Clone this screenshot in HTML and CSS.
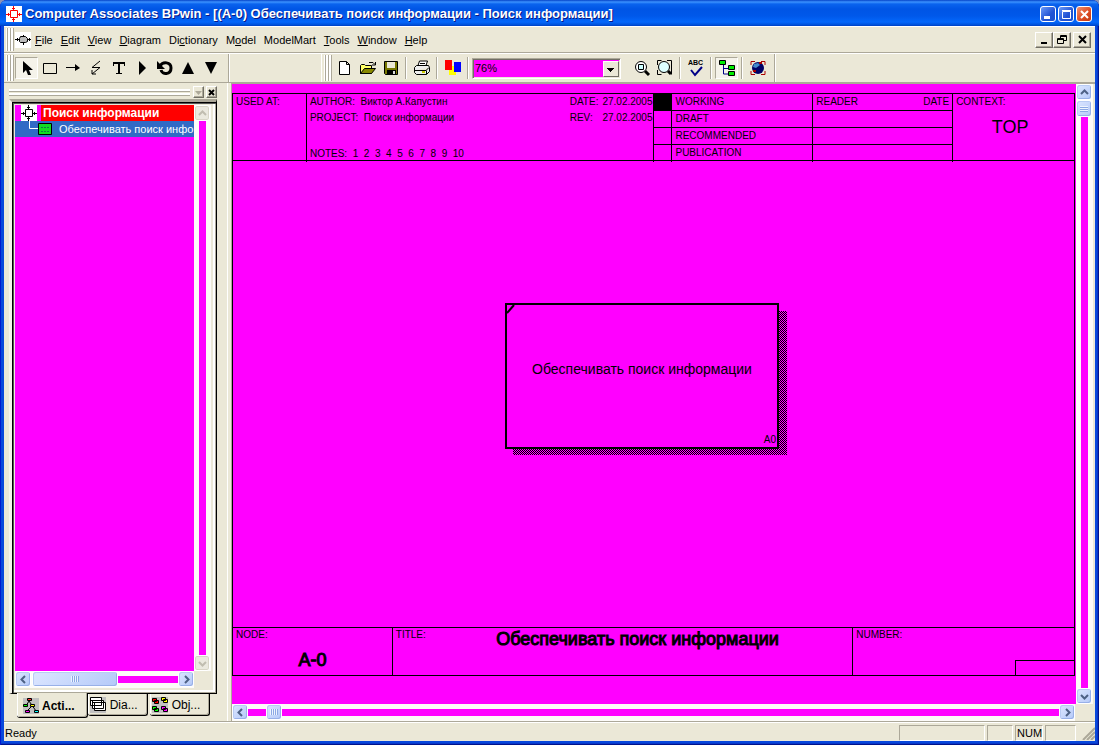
FILE: index.html
```html
<!DOCTYPE html>
<html lang="ru">
<head>
<meta charset="utf-8">
<title>Computer Associates BPwin</title>
<link rel="stylesheet" href="styles.css">
</head>
<body>
<div class="window">
  <header class="titlebar">
    <svg class="app-icon" width="16" height="16" viewBox="0 0 16 16"><path fill="#fff" d="M0 0h16v16H0z"/><g fill="none" stroke="#f00"><path d="M4.500 4.500h7v7h-7zM7.500 0v4M7.500 12v4M0 8.500h4M12 8.500h4"/><path d="M6 2.500h3M6 13.500h3M2.500 7v3M13.500 7v3"/></g></svg>
    <h1 class="title">Computer Associates BPwin - [(A-0) Обеспечивать поиск информации - Поиск информации]</h1>
    <button class="cap" aria-label="Minimize"><svg width="13" height="13"><path fill="#fff" d="M2 8h6v3H2z"/></svg></button>
    <button class="cap" aria-label="Maximize"><svg width="13" height="13"><path fill="none" stroke="#fff" d="M2.500 3.500h8v7h-8zM2 2.500h9"/></svg></button>
    <button class="cap cap-close" aria-label="Close"><svg width="13" height="13"><path stroke="#fff" stroke-width="2" d="M3 3l7 7M10 3l-7 7"/></svg></button>
  </header>

  <div class="client">
    <nav class="menubar">
      <span class="grip"></span>
      <svg class="doc-icon" width="16" height="16" viewBox="0 0 16 16"><path fill="#fff" d="M0 0h16v16H0z"/><path fill="#bbb" stroke="#000" d="M5.500 4.500h5l2 2v3l-2 1h-5l-1-1v-3z"/><path stroke="#000" fill="none" d="M0 7.500h4M2.500 6v3M12 7.500h4M14.500 6v3M8.500 3v1M8.500 11v2"/></svg>
      <button class="menu"><u>F</u>ile</button>
      <button class="menu"><u>E</u>dit</button>
      <button class="menu"><u>V</u>iew</button>
      <button class="menu"><u>D</u>iagram</button>
      <button class="menu">Di<u>c</u>tionary</button>
      <button class="menu">M<u>o</u>del</button>
      <button class="menu">ModelMart</button>
      <button class="menu"><u>T</u>ools</button>
      <button class="menu"><u>W</u>indow</button>
      <button class="menu"><u>H</u>elp</button>
      <div class="mdi">
        <button class="mdi-btn" aria-label="Minimize document"><svg width="12" height="10"><path d="M3 7h6v2H3z"/></svg></button>
        <button class="mdi-btn" aria-label="Restore document"><svg width="12" height="10"><path fill="none" stroke="#000" d="M4.500 3V.5h6v5H8M4 1.500h7M1.500 3.500h6v5h-6zM1 4.500h7"/></svg></button>
        <button class="mdi-btn mdi-close" aria-label="Close document"><svg width="12" height="10"><path stroke="#000" stroke-width="2" d="M3 1l7 7M10 1l-7 7"/></svg></button>
      </div>
    </nav>

    <div class="toolbars">
      <div class="toolbar tools">
        <span class="grip"></span>
        <button class="tool pressed" aria-label="Pointer"><svg width="18" height="18"><path d="M5 2v12l3-3 2 5h3l-2-5h4z"/></svg></button>
        <button class="tool" aria-label="Activity box"><svg width="18" height="18"><path fill="none" stroke="#000" d="M2.500 4.500h13v10h-13z"/></svg></button>
        <button class="tool" aria-label="Arrow"><svg width="18" height="18"><path d="M2 8h9V5l5 4-5 3V9H2z"/></svg></button>
        <button class="tool" aria-label="Squiggle"><svg width="18" height="18"><path fill="none" stroke="#000" d="M13 2L5 8.500h8L5 15M5 11v4h4"/></svg></button>
        <button class="tool" aria-label="Text"><svg width="18" height="18"><path d="M3 3h12v4h-1V5h-4v9h2v1H6v-1h2V5H4v2H3z"/></svg></button>
        <button class="tool" aria-label="Diagram dictionary"><svg width="18" height="18"><path d="M6 2v14l7-7z"/></svg></button>
        <button class="tool" aria-label="Go to sibling"><svg width="18" height="18"><path fill="none" stroke="#000" stroke-width="3" d="M4 7C7 2 15 3 15 9c0 7-9 7-10 2"/><path d="M1 2v8h8z"/></svg></button>
        <button class="tool" aria-label="Go to parent"><svg width="18" height="18"><path d="M9 3l6 12H3z"/></svg></button>
        <button class="tool" aria-label="Go to child"><svg width="18" height="18"><path d="M9 15L3 3h12z"/></svg></button>
      </div>
      <div class="toolbar standard">
        <span class="grip"></span>
        <button class="tool" aria-label="New"><svg width="18" height="18"><path fill="#fff" stroke="#000" d="M3.500 2.500h7l3 3v10h-10zM10.500 2.500v3h3"/></svg></button>
        <button class="tool" aria-label="Open"><svg width="18" height="18"><path fill="#ff6" stroke="#000" d="M1.500 14.500v-8l1-1h3l1 1h6v8z"/><path fill="#880" stroke="#000" d="M1.500 14.500l4-5h11l-4 5z"/><path fill="none" stroke="#000" d="M10 3.500h4l2 2M16.500 3v3H13"/></svg></button>
        <button class="tool" aria-label="Save"><svg width="18" height="18"><path fill="#770" stroke="#000" d="M2.500 2.500h13v13h-12l-1-1z"/><path fill="#ebe8d7" d="M5 3h8v6H5z"/><path d="M5 11h9v5H5z"/><path fill="#ddd" d="M11 12h2v3h-2z"/></svg></button>
        <span class="sep"></span>
        <button class="tool" aria-label="Print"><svg width="18" height="18"><path fill="#fff" stroke="#000" d="M4.500 8l2-6h8l-2 6z"/><path fill="#eee" stroke="#000" d="M1.500 8.500l2-2h12l1 2v4l-3 3h-10l-2-2zM2 11.500h11l3-3M13.500 11.500v4"/><path stroke="#000" d="M7 4.500h5M6 6.500h5"/><path fill="#cc0" d="M9 12h3v2H9z"/></svg></button>
        <span class="sep"></span>
        <button class="tool" aria-label="Colors"><svg width="18" height="18"><path fill="#ff0" d="M5 7h7v9H5z"/><path fill="#f00" d="M1 1h7v10H1z"/><path fill="#00f" d="M10 3h7v10h-7z"/></svg></button>
        <span class="sep"></span>
        <span class="combo">
          <select class="zoom" aria-label="Zoom"><option>76%</option><option>100%</option></select>
          <span class="combo-arrow"><svg width="12" height="12"><path d="M2 5h7v1H8v1H7v1H6v1H5V8H4V7H3V6H2z"/></svg></span>
        </span>
        <button class="tool" aria-label="Zoom in"><svg width="18" height="18"><circle cx="8" cy="8" r="5.500" fill="#fff" stroke="#000"/><path fill="#cff" stroke="#000" d="M5.500 5.500h5v5h-5z"/><path stroke="#000" stroke-width="3" d="M12 12l4 4"/></svg></button>
        <button class="tool" aria-label="Fit to window"><svg width="18" height="18"><path fill="none" stroke="#000" d="M1.500 6V1.500h4M11 1.500h4.500v14M1.500 11v4.500h4"/><circle cx="8" cy="8" r="5.500" fill="#dff" stroke="#000"/><path stroke="#000" stroke-width="3" d="M12 12l3 3"/></svg></button>
        <span class="sep"></span>
        <button class="tool" aria-label="Spell check"><span class="abc">ABC</span><svg width="18" height="11"><path fill="none" stroke="#008" stroke-width="2" d="M4 4l4 5 7-8"/></svg></button>
        <span class="sep"></span>
        <button class="tool pressed" aria-label="Model explorer"><svg width="18" height="18"><path fill="none" stroke="#008" d="M5.500 5v10H11M6 9.500h5"/><g fill="#0e0" stroke="#000"><path d="M1.500 1.500h6v4h-6zM10.500 6.500h6v4h-6zM10.500 12.500h6v4h-6z"/></g></svg></button>
        <span class="sep"></span>
        <button class="tool" aria-label="ModelMart"><svg width="18" height="18"><path fill="none" stroke="#a00" d="M2 6V2.500h4M12 2.500h4V6M2 12v3.500h4M12 15.500h4V12"/><circle cx="9" cy="9" r="6" fill="#006"/><path fill="#48c" d="M5 5l4-1 2 2-4 3-3-1z"/><path fill="#a00" d="M10 3h3v2h-3zM4 11h3v2H4z"/></svg></button>
      </div>
    </div>

    <main class="workspace">
      <aside class="explorer">
        <div class="dock-bar">
          <span class="dock-grip"></span>
          <button class="dock-btn" aria-label="Panel menu" disabled><svg width="9" height="9"><path fill="#aca899" d="M1 3h7L4.500 7z"/></svg></button>
          <button class="dock-btn" aria-label="Close panel"><svg width="9" height="9"><path stroke="#000" stroke-width="2" d="M2 2l5 5M7 2L2 7"/></svg></button>
        </div>
        <div class="tree-frame">
          <div class="tree-row">
            <ul class="tree">
              <li class="node root"><svg width="16" height="16"><path fill="#fff" d="M0 0h16v16H0z"/><path fill="none" stroke="#000" d="M4.500 4.500h7v7h-7zM7.500 0v4M7.500 12v4M0 8.500h4M12 8.500h4M6 2.500h3M6 13.500h3M2.500 7v3M13.500 7v3"/></svg><span>Поиск информации</span></li>
              <li class="node child"><svg width="32" height="16"><path fill="none" stroke="#fff" d="M8.500 0v7.500H17"/><path fill="#1d2" stroke="#000" d="M17.500 2.500h13v11h-13z"/><path stroke="#174" stroke-dasharray="2 1" d="M20 6.500h9M20 10.500h9"/></svg><span>Обеспечивать поиск инфо</span></li>
            </ul>
            <div class="vbar muted">
              <button class="sb" aria-label="Tree up"><svg width="11" height="11"><path d="M2 7l3.500-3.500L9 7"/></svg></button>
              <span class="lane"></span>
              <button class="sb" aria-label="Tree down"><svg width="11" height="11"><path d="M2 4l3.500 3.500L9 4"/></svg></button>
            </div>
          </div>
          <div class="hbar tree-hbar">
            <button class="sb" aria-label="Tree left"><svg width="11" height="11"><path d="M7 2L3.500 5.500 7 9"/></svg></button>
            <span class="thumb long"></span>
            <span class="lane"></span>
            <button class="sb" aria-label="Tree right"><svg width="11" height="11"><path d="M4 2l3.500 3.500L4 9"/></svg></button>
          </div>
        </div>
        <div class="tabs" role="tablist">
          <button class="tab active" role="tab" aria-selected="true"><svg width="16" height="16"><path fill="#c0c0c0" d="M0 0h16v16H0z"/><path fill="none" stroke="#000" d="M6 3L3 8M6 3l7 10M9 8l-5 5"/><g stroke="#000"><path fill="#f33" d="M4.500.5h4v2h-4z"/><path fill="#0f0" d="M.5 6.500h4v2h-4z"/><path fill="#ff0" d="M7.500 6.500h4v2h-4z"/><path fill="#f0f" d="M2.500 12.500h4v2h-4z"/><path fill="#0ff" d="M11.500 12.500h4v2h-4z"/></g></svg><span>Acti...</span></button>
          <button class="tab" role="tab"><svg width="16" height="16"><path fill="#c0c0c0" d="M0 0h16v16H0z"/><path fill="#fff" stroke="#000" d="M4.500 5.500h11v8h-11zM2.500 3.500h11v8h-11zM.5.500h11v8H.5zM1 3.500h10M3 5.500h3M7 5.500h3"/></svg><span>Dia...</span></button>
          <button class="tab" role="tab"><svg width="16" height="16"><path fill="#c0c0c0" d="M0 0h16v16H0z"/><g stroke="#000"><path fill="#f00" d="M.5 1.500h4v3h-4zM2.500 3.500h4v3h-4z"/><path fill="#ff0" d="M9.500.5h4v3h-4zM11.500 2.500h4v3h-4z"/><path fill="#0f0" d="M.5 9.500h4v3h-4zM2.500 11.500h4v3h-4z"/><path fill="#f0f" d="M9.500 9.500h4v3h-4zM11.500 11.500h4v3h-4z"/></g></svg><span>Obj...</span></button>
        </div>
      </aside>

      <section class="editor">
        <div class="canvas-row">
          <div class="canvas">
            <div class="sheet">
              <div class="kit">
                <div class="cell used">USED AT:</div>
                <div class="cell about">
                  <div class="lines"><span>AUTHOR:&nbsp; Виктор А.Капустин</span><span>PROJECT:&nbsp; Поиск информации</span><span class="notes">NOTES:&nbsp; 1&nbsp; 2&nbsp; 3&nbsp; 4&nbsp; 5&nbsp; 6&nbsp; 7&nbsp; 8&nbsp; 9&nbsp; 10</span></div>
                  <div class="dates"><span>DATE:</span><span>27.02.2005</span><span>REV:</span><span>27.02.2005</span></div>
                </div>
                <div class="stack"><i class="on"></i><i></i><i></i><i></i></div>
                <div class="stack"><span>WORKING</span><span>DRAFT</span><span>RECOMMENDED</span><span>PUBLICATION</span></div>
                <div class="stack"><span class="reader"><b>READER</b><b>DATE</b></span><span></span><span></span><span></span></div>
                <div class="cell context">CONTEXT:<strong class="top">TOP</strong></div>
              </div>
              <div class="plane">
                <svg class="activity-shadow" width="274" height="144" shape-rendering="crispEdges"><defs><pattern id="dither" width="2" height="2" patternUnits="userSpaceOnUse"><path d="M0 0h1v1H0zM1 1h1v1H1z"/></pattern></defs><path fill="url(#dither)" d="M0 0h274v144H0z"/></svg>
                <div class="activity">
                  <svg class="corner" width="8" height="9"><path stroke="#000" stroke-width="2" d="M0 8L7 0"/></svg>
                  <span>Обеспечивать поиск информации</span>
                  <small class="activity-no">A0</small>
                </div>
              </div>
              <div class="foot">
                <div class="cell">NODE:<strong class="node-no">A-0</strong></div>
                <div class="cell title-cell"><span>TITLE:</span><strong class="diagram-title">Обеспечивать поиск информации</strong></div>
                <div class="cell number">NUMBER:<i class="number-box"></i></div>
              </div>
            </div>
          </div>
          <div class="vbar">
            <button class="sb" aria-label="Scroll up"><svg width="11" height="11"><path d="M2 7l3.500-3.500L9 7"/></svg></button>
            <span class="thumb tall"></span>
            <span class="lane"></span>
            <button class="sb" aria-label="Scroll down"><svg width="11" height="11"><path d="M2 4l3.500 3.500L9 4"/></svg></button>
          </div>
        </div>
        <div class="hbar editor-hbar">
          <button class="sb" aria-label="Scroll left"><svg width="11" height="11"><path d="M7 2L3.500 5.500 7 9"/></svg></button>
          <span class="lane before"></span>
          <span class="thumb"></span>
          <span class="lane"></span>
          <button class="sb" aria-label="Scroll right"><svg width="11" height="11"><path d="M4 2l3.500 3.500L4 9"/></svg></button>
        </div>
      </section>
    </main>

    <footer class="status">
      <span class="ready">Ready</span>
      <span class="pane wide"></span><span class="pane"></span><span class="pane num">NUM</span><span class="pane last"></span>
      <svg width="14" height="14"><path stroke="#aca899" stroke-width="2" d="M2 14L14 2M6 14l8-8M10 14l4-4"/></svg>
    </footer>
  </div>
</div>
</body>
</html>
```
FILE: styles.css
```css
* { box-sizing: border-box; }
body { margin: 0; background: #8a94b8; font: 11px/14px "Liberation Sans", Arial, sans-serif; color: #000; }
button { font: inherit; color: inherit; margin: 0; padding: 0; border: 0; background: none; }
svg { display: block; flex: none; }
ul { list-style: none; margin: 0; padding: 0; }

.window { height: 100vh; display: flex; flex-direction: column; padding: 0 4px 4px; border-radius: 7px 7px 0 0; overflow: hidden;
  background: #0848dc; box-shadow: inset 1px 0 #0019cf, inset -1px -1px #00138c, inset -2px -2px #0838c8; }
.titlebar { display: flex; align-items: center; gap: 2px; height: 26px; margin: 0 -4px; padding: 2px 6px 0; flex: none;
  background: linear-gradient(#0543c8 0, #3c92ff 2px, #0a63ee 4px, #0055e5 9px, #0058ea 16px, #0467fb 22px, #0050d8 25px, #003cc0 26px); }
.title { flex: 1; margin: 0 0 0 1px; font: bold 13px/18px "Liberation Sans", Arial, sans-serif; color: #fff; text-shadow: 1px 1px #0a1883; white-space: nowrap; overflow: hidden; }
.cap { width: 16px; height: 16px; display: grid; place-items: center; border: 1px solid #fff; border-radius: 3px; background: linear-gradient(135deg, #6a9af8, #2253d4 60%, #1b50d0); }
.cap-close { background: linear-gradient(135deg, #f09070, #dc4a20 60%, #c03a14); margin-right: 1px; }

.client { flex: 1; min-height: 0; display: flex; flex-direction: column; background: #ebe8d7; border-top: 1px solid #fff; }
.grip { width: 7px; margin: 0 4px 0 3px; align-self: stretch; flex: none; border: solid #aca899; border-width: 0 1px; background: linear-gradient(90deg, #fff 2px, #aca899 2px, #aca899 3px, #fff 3px); box-shadow: -1px 0 #fff; }
.menubar { display: flex; align-items: center; height: 26px; flex: none; padding: 1px 4px 1px 0; border-bottom: 1px solid #aca899; }
.doc-icon { margin-left: -3px; }
.menu { padding: 0 4px; line-height: 18px; }
.mdi { display: flex; margin-left: auto; }
.mdi-btn, .dock-btn { border: 1px solid; border-color: #fff #716f64 #716f64 #fff; box-shadow: inset -1px -1px #aca899; background: #ebe8d7; display: grid; place-items: center; }
.mdi-btn { width: 18px; height: 16px; }
.mdi-close { margin-left: 2px; }

.toolbars { display: flex; height: 30px; flex: none; border-top: 1px solid #fff; border-bottom: 1px solid #aca899; }
.toolbar { display: flex; align-items: center; border-right: 1px solid #aca899; box-shadow: 1px 0 #fff; padding: 1px 0; }
.tools { width: 225px; padding-right: 6px; }
.tools .grip { margin-right: 1px; }
.standard { margin-left: 92px; border-left: 1px solid #fff; padding-right: 5px; }
.standard .grip { margin-right: 1px; }
.tool { width: 23px; height: 22px; display: flex; flex-direction: column; align-items: center; justify-content: center; }
.pressed { border: 1px solid; border-color: #aca899 #fff #fff #aca899; background: #f5f3ea; }
.sep { width: 2px; height: 22px; margin: 0 3px; border-left: 1px solid #aca899; border-right: 1px solid #fff; }
.combo { display: flex; width: 149px; height: 21px; margin: 0 9px 0 0; border: 1px solid; border-color: #aca899 #fff #fff #aca899; box-shadow: inset 1px 1px #716f64, inset -1px -1px #ebe8d7; padding: 2px; background: #f0f; position: relative; }
.zoom { appearance: none; flex: 1; border: 0; background: none; font: 11px/14px "Liberation Sans", Arial, sans-serif; padding: 0 20px 0 0; color: #000; }
.combo-arrow { position: absolute; right: 1px; top: 2px; bottom: 1px; width: 16px; display: grid; place-items: center; pointer-events: none; background: #ebe8d7; border: 1px solid; border-color: #fff #716f64 #716f64 #fff; }
.abc { font: bold 7px/7px "Liberation Sans", Arial, sans-serif; }

.workspace { flex: 1; min-height: 0; display: flex; }
.explorer { width: 224px; flex: none; display: flex; flex-direction: column; padding: 3px 10px 3px 5px; border-right: 1px solid #fff; }
.dock-bar { display: flex; align-items: center; gap: 2px; height: 12px; flex: none; }
.dock-grip { flex: 1; height: 7px; margin-right: 1px; border: solid #aca899; border-width: 0 0 1px; background: linear-gradient(#fff 2px, #aca899 2px, #aca899 3px, #ebe8d7 3px, #ebe8d7 4px, #fff 4px); }
.dock-btn { width: 11px; height: 12px; }
.tree-frame { flex: 1; min-height: 0; display: flex; flex-direction: column; margin-top: 1px; padding: 3px 5px 5px 3px; border: solid; border-width: 3px 1px 1px 3px; border-color: #aca899 #000 #000 #f6f4ec; box-shadow: inset 1px 1px #000, inset 2px 2px #555, inset -1px -1px #aca899, inset -3px -3px #fff; }
.tree-row { flex: 1; min-height: 0; display: flex; }
.tree { flex: 1; min-width: 0; background: #f0f; overflow: hidden; }
.node { display: flex; align-items: center; height: 16px; padding-left: 6px; color: #fff; white-space: nowrap; }
.node span { padding-left: 6px; }
.root { background: linear-gradient(90deg, #f0f 26px, #f00 26px); font-weight: bold; font-size: 12px; }
.child { background: #316ac5; }

.vbar { width: 17px; display: flex; flex-direction: column; align-items: stretch; flex: none; background: #fcfbf8; }
.hbar { height: 17px; display: flex; flex: none; background: #fcfbf8; }
.lane { flex: 1; background: #f0f; }
.vbar .lane { margin: 0 5px; }
.hbar .lane { margin: 5px 0; }
.sb, .thumb { flex: none; width: 16px; height: 16px; border: 1px solid #fff; border-radius: 3px; background: linear-gradient(135deg, #dce6ff, #b4c9f8); box-shadow: inset -1px -1px #98b0e8, inset 1px 1px #b8cbf4; display: grid; place-items: center; }
.sb path { fill: none; stroke: #4d6185; stroke-width: 2; }
.muted .sb { background: #ebe9df; box-shadow: inset 0 0 0 1px #d8d5c6; }
.muted .sb path { stroke: #c0bdb0; }
.thumb::before { content: ""; width: 8px; height: 6px; background: repeating-linear-gradient(90deg, #eef4fe 0 1px, #8ca8e4 1px 2px); }
.tall { height: 17px; }
.tall::before { background: repeating-linear-gradient(#eef4fe 0 1px, #8ca8e4 1px 2px); }
.long { width: 86px; margin-left: 1px; }
.tree-hbar { margin-right: 17px; }

.tabs { display: flex; align-items: flex-start; height: 24px; flex: none; padding-left: 8px; }
.tab { display: flex; align-items: center; gap: 4px; height: 22px; padding: 0 9px 0 2px; margin-right: 2px; font-size: 12px; border: solid #000; border-width: 0 1px 1px 0; border-radius: 0 0 3px 3px; box-shadow: inset 1px 0 #fff, inset -1px -1px #aca899; }
.active { height: 25px; margin-top: -1px; padding: 2px 12px 1px 6px; margin-right: 0; gap: 3px; font-weight: bold; background: #ebe8d7; }

.editor { flex: 1; min-width: 0; display: flex; flex-direction: column; margin-left: 3px; border: solid #aca899; border-width: 1px 0 0 1px; }
.canvas-row { flex: 1; min-height: 0; display: flex; padding-right: 2px; }
.canvas { flex: 1; min-width: 0; display: flex; background: #f0f; padding: 9px 1px 28px 0; font-size: 10px; line-height: 12px; }
.sheet { flex: 1; min-width: 0; display: flex; flex-direction: column; border: 1px solid #000; }
.kit { display: grid; grid-template-columns: 74fr 347fr 19fr 141fr 140fr 121fr; height: 67px; flex: none; border-bottom: 1px solid #000; }
.cell { padding: 2px 3px; border-right: 1px solid #000; min-width: 0; }
.cell:last-child { border-right: 0; }
.about { display: flex; justify-content: space-between; padding-right: 0; white-space: nowrap; }
.lines { display: flex; flex-direction: column; gap: 4px; }
.notes { margin-top: auto; }
.dates { display: grid; grid-template-columns: auto auto; gap: 4px; align-content: start; }
.stack { display: grid; grid-template-rows: repeat(4, 1fr); border-right: 1px solid #000; min-width: 0; }
.stack > * { border-bottom: 1px solid #000; padding: 2px 3px; }
.stack > :last-child { border-bottom: 0; }
.on { background: #000; }
.reader { display: flex; justify-content: space-between; }
.reader b { font-weight: normal; }
.context { display: flex; flex-direction: column; }
.top, .node-no, .diagram-title { font-weight: normal; font-size: 18px; line-height: 20px; text-align: center; -webkit-text-stroke: 1px #000; }
.top { margin: 9px 7px 0 0; -webkit-text-stroke: 0; }

.plane { flex: 1; min-height: 0; position: relative; }
.activity { position: absolute; left: 272px; top: 142px; width: 274px; height: 146px; display: grid; place-items: center; padding-bottom: 14px; border: 2px solid #000; background: #f0f; font-size: 14px; line-height: 18px; white-space: nowrap; }
.activity-shadow { position: absolute; left: 280px; top: 150px; }
.corner { position: absolute; left: 0; top: 0; }
.activity-no { position: absolute; right: 1px; bottom: 1px; font-size: 10px; line-height: 12px; }

.foot { display: grid; grid-template-columns: 160fr 461fr 221fr; height: 48px; flex: none; border-top: 1px solid #000; }
.foot .cell { padding-top: 1px; }
.node-no { display: block; margin-top: 9px; }
.title-cell { display: flex; }
.diagram-title { flex: 1; white-space: nowrap; }
.foot .number { display: flex; flex-direction: column; padding-right: 0; padding-bottom: 0; }
.number-box { width: 59px; height: 15px; margin: auto 0 0 auto; border: solid #000; border-width: 1px 0 0 1px; }
.editor-hbar { margin-right: 20px; }
.before { flex: 0 0 18px; }

.status { display: flex; align-items: center; gap: 2px; height: 20px; flex: none; border-top: 1px solid #aca899; padding: 2px 0 0 1px; box-shadow: inset 0 1px #fff; }
.ready { flex: 1; }
.pane { height: 16px; width: 26px; border: 1px solid; border-color: #aca899 #fff #fff #aca899; }
.wide { width: 86px; }
.num { width: 28px; padding-left: 1px; }
.last { width: 31px; margin-right: 3px; }
```
